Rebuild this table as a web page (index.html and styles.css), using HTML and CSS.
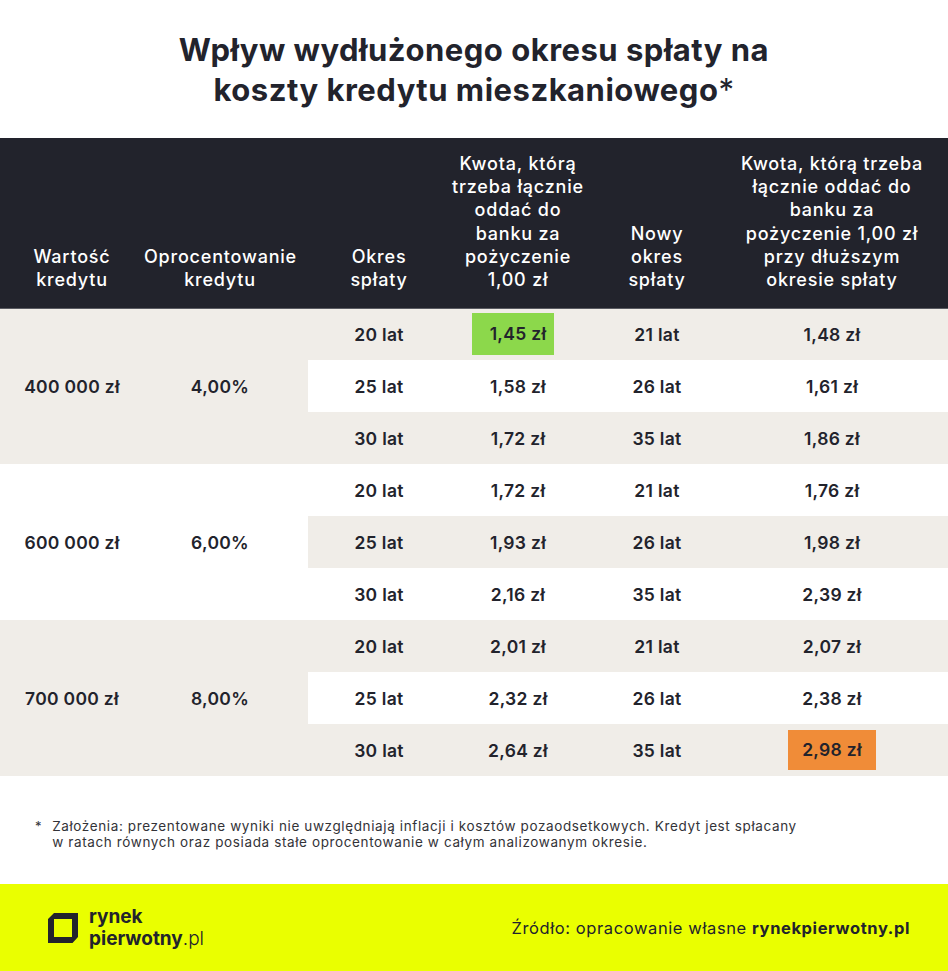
FILE: index.html
```html
<!DOCTYPE html>
<html lang="pl">
<head>
<meta charset="utf-8">
<title>Wpływ wydłużonego okresu spłaty</title>
<link rel="stylesheet" href="styles.css">
</head>
<body>
<h1 class="title">Wpływ wydłużonego okresu spłaty na<br>koszty kredytu mieszkaniowego<span class="ast">*</span></h1>

<table class="grid">
  <colgroup>
    <col class="c1"><col class="c2"><col class="c3"><col class="c4"><col class="c5"><col class="c6">
  </colgroup>
  <thead>
    <tr>
      <th>Wartość<br>kredytu</th>
      <th class="pr">Oprocentowanie<br>kredytu</th>
      <th>Okres<br>spłaty</th>
      <th>Kwota, którą<br>trzeba łącznie<br>oddać do<br>banku za<br>pożyczenie<br>1,00 zł</th>
      <th>Nowy<br>okres<br>spłaty</th>
      <th class="pr">Kwota, którą trzeba<br>łącznie oddać do<br>banku za<br>pożyczenie 1,00 zł<br>przy dłuższym<br>okresie spłaty</th>
    </tr>
  </thead>
  <tbody>
    <tr class="beige">
      <td rowspan="3" class="beige">400 000 zł</td>
      <td rowspan="3" class="beige pr">4,00%</td>
      <td>20 lat</td><td><span class="hl green">1,45 zł</span></td><td>21 lat</td><td class="pr">1,48 zł</td>
    </tr>
    <tr><td>25 lat</td><td>1,58 zł</td><td>26 lat</td><td class="pr">1,61 zł</td></tr>
    <tr class="beige"><td>30 lat</td><td>1,72 zł</td><td>35 lat</td><td class="pr">1,86 zł</td></tr>

    <tr>
      <td rowspan="3">600 000 zł</td>
      <td rowspan="3" class="pr">6,00%</td>
      <td>20 lat</td><td>1,72 zł</td><td>21 lat</td><td class="pr">1,76 zł</td>
    </tr>
    <tr class="beige"><td>25 lat</td><td>1,93 zł</td><td>26 lat</td><td class="pr">1,98 zł</td></tr>
    <tr><td>30 lat</td><td>2,16 zł</td><td>35 lat</td><td class="pr">2,39 zł</td></tr>

    <tr class="beige">
      <td rowspan="3" class="beige">700 000 zł</td>
      <td rowspan="3" class="beige pr">8,00%</td>
      <td>20 lat</td><td>2,01 zł</td><td>21 lat</td><td class="pr">2,07 zł</td>
    </tr>
    <tr><td>25 lat</td><td>2,32 zł</td><td>26 lat</td><td class="pr">2,38 zł</td></tr>
    <tr class="beige"><td>30 lat</td><td>2,64 zł</td><td>35 lat</td><td class="pr"><span class="hl orange">2,98 zł</span></td></tr>
  </tbody>
</table>

<div class="note">
  <span class="note-mark">*</span>
  <p class="note-text">Założenia: prezentowane wyniki nie uwzględniają inflacji i kosztów pozaodsetkowych. Kredyt jest spłacany<br>w ratach równych oraz posiada stałe oprocentowanie w całym analizowanym okresie.</p>
</div>

<footer class="footer">
  <div class="logo">
    <svg class="logo-icon" viewBox="0 0 30 30" width="30" height="30" aria-hidden="true">
      <path fill="#22232c" fill-rule="evenodd" d="M6 0H30V24L24.5 30H0V6ZM6 6V24H24V6Z"/>
    </svg>
    <div class="logo-text"><span class="lb">rynek</span><span class="lb">pierwotny<span class="pl">.pl</span></span></div>
  </div>
  <p class="source">Źródło: opracowanie własne <b>rynekpierwotny.pl</b></p>
</footer>
</body>
</html>
```

FILE: styles.css
```css
* { box-sizing: border-box; }

body {
  margin: 0;
  width: 948px;
  background: #ffffff;
  font-family: "Inter", "Noto Sans", sans-serif;
  color: #22232c;
}

.title {
  margin: 30px 0 28px;
  text-align: center;
  font-size: 31px;
  line-height: 40px;
  font-weight: 700;
  letter-spacing: 0.5px;
  color: #22232c;
}
.title .ast { font-weight: 400; }

.grid {
  width: 948px;
  border-collapse: collapse;
  table-layout: fixed;
}
.c1 { width: 144px; }
.c2 { width: 164px; }
.c3 { width: 142px; }
.c4 { width: 136px; }
.c5 { width: 142px; }
.c6 { width: 220px; }

.grid th {
  height: 170px;
  background: #22232c;
  color: #ffffff;
  font-size: 18px;
  line-height: 23.3px;
  font-weight: 500;
  letter-spacing: 0.8px;
  vertical-align: bottom;
  text-align: center;
  padding: 0 0 16px;
  border-bottom: 1px solid #5a5b62;
}

.grid td {
  height: 52px;
  padding: 0;
  text-align: center;
  vertical-align: middle;
  font-size: 17.5px;
  font-weight: 600;
  letter-spacing: 0.3px;
  color: #22232c;
}
.grid th.pr, .grid td.pr { padding-right: 12px; }

.beige > td, td.beige { background: #f0ede8; }
tr.beige > td[rowspan]:not(.beige) { background: #ffffff; }

.hl {
  display: inline-block;
  height: 42px;
  line-height: 42px;
}
.green {
  background: #8cd84b;
  padding: 0 8px 0 18px;
  margin-left: -10px;
}
.orange {
  background: #f08c38;
  height: 40px;
  line-height: 40px;
  padding: 0 14px;
}

.note {
  display: flex;
  gap: 10px;
  margin: 42px 0 0 35px;
  font-size: 13.5px;
  line-height: 16px;
  letter-spacing: 0.62px;
  color: #333338;
}
.note-mark { font-size: 13px; }
.note-text { margin: 0; font-weight: 400; }

.footer {
  margin-top: 34px;
  height: 87px;
  background: #eaff00;
  display: flex;
  align-items: center;
  justify-content: space-between;
  padding: 0 38px 0 48px;
}
.logo {
  display: flex;
  align-items: center;
  gap: 11px;
  padding-top: 1px;
}
.logo-icon { display: block; }
.logo-text {
  display: flex;
  flex-direction: column;
  font-size: 19px;
  line-height: 22px;
  font-weight: 700;
  letter-spacing: 0;
  color: #22232c;
}
.logo-text .pl { font-weight: 300; }
.source {
  margin: 0;
  font-size: 16.5px;
  font-weight: 400;
  letter-spacing: 0.6px;
  color: #22232c;
}
.source b { font-weight: 700; }
```
